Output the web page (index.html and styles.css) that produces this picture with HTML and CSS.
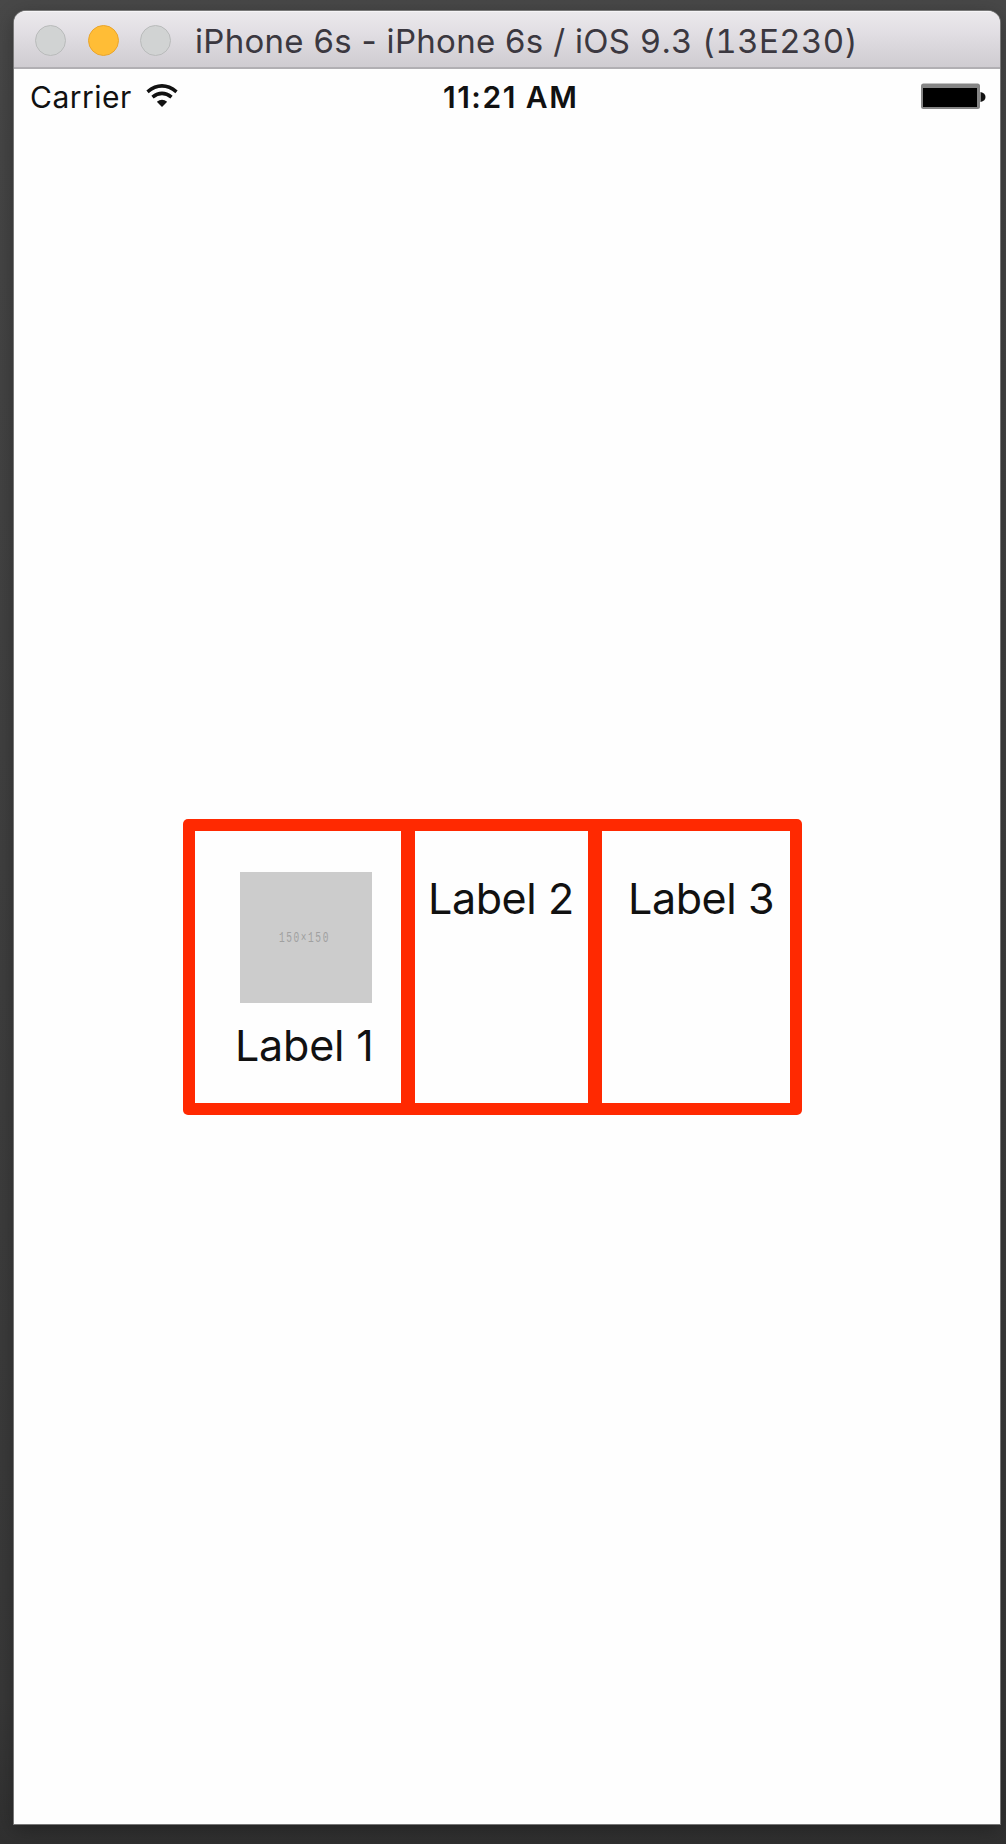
FILE: index.html
```html
<!DOCTYPE html>
<html lang="en">
<head>
<meta charset="utf-8">
<title>iPhone 6s Simulator</title>
<link rel="stylesheet" href="styles.css">
</head>
<body>
<main class="window">
  <header class="titlebar">
    <div class="controls">
      <span class="control"></span>
      <span class="control control-minimize"></span>
      <span class="control"></span>
    </div>
    <h1 class="title">iPhone 6s - iPhone 6s / iOS <span class="version">9.3 (13E230)</span></h1>
  </header>
  <section class="screen">
    <div class="statusbar">
      <div class="network">
        <span class="carrier">Carrier</span>
        <svg class="wifi" width="32" height="24" viewBox="0 0 32 24">
          <path d="M1.5 7.8Q16 -4 30.5 7.8M6.5 13.2Q16 5.7 25.5 13.2" fill="none" stroke="#111" stroke-width="3.6"/>
          <path d="M10.8 17.7Q16 13.8 21.2 17.7L16 23Z" fill="#111"/>
        </svg>
      </div>
      <span class="time">11:21 AM</span>
      <svg class="battery" width="66" height="27" viewBox="0 0 66 27">
        <rect x="0" y="0.5" width="59" height="25.5" rx="2.5" fill="#858585"/>
        <rect x="2" y="5" width="54" height="19" fill="#000"/>
        <path d="M59.5 9Q64.5 10 64.5 14Q64.5 18 59.5 19Z" fill="#111"/>
      </svg>
    </div>
    <div class="stack">
      <div class="cell cell-first">
        <div class="placeholder"><span class="dimensions">150×150</span></div>
        <span class="label label-one">Label 1</span>
      </div>
      <div class="cell cell-second"><span class="label">Label 2</span></div>
      <div class="cell cell-third"><span class="label">Label 3</span></div>
    </div>
  </section>
</main>
</body>
</html>
```
FILE: styles.css
```css
* { box-sizing: border-box; }
body {
  margin: 0;
  height: 1844px;
  padding: 11px 6px 20px 14px;
  background: linear-gradient(#484848 0, #454545 150px, #383838 1700px, #303030 1844px);
  font-family: Inter, "Liberation Sans", sans-serif;
  color: #111;
  overflow: hidden;
}
.window {
  display: flex;
  flex-direction: column;
  height: 1813px;
  border-radius: 12px 12px 0 0;
  overflow: hidden;
  background: #fefefe;
  box-shadow: 0 0 0 1px #777, 0 5px 20px rgba(0, 0, 0, .3);
}
.titlebar {
  display: flex;
  align-items: center;
  height: 58px;
  padding-left: 21px;
  background: linear-gradient(#ebe9ec, #e2dfe4 35%, #cfccd1);
  border-bottom: 2px solid #b1afb3;
  border-top: 1px solid #f6f5f7;
}
.controls { display: flex; gap: 21.5px; width: 160px; margin-top: 1px; }
.control {
  width: 31px;
  height: 31px;
  border-radius: 50%;
  background: #d1d3d3;
  border: 1.5px solid #b9bbbb;
}
.control-minimize { background: #ffbd36; border-color: #e9a52d; }
.title {
  margin: 2px 0 0;
  font-size: 33px;
  font-weight: 400;
  letter-spacing: .3px;
  line-height: 40px;
  color: #3b3840;
  white-space: nowrap;
}
.version { font-variant-numeric: tabular-nums; letter-spacing: .42px; }
.statusbar {
  display: grid;
  grid-template-columns: 429px 1fr 79px;
  align-items: center;
  height: 56px;
}
.network { display: flex; align-items: center; gap: 14px; padding-left: 16px; }
.carrier { width: 102px; font-size: 30px; letter-spacing: .5px; white-space: nowrap; }
.wifi { margin-bottom: 3px; }
.time { font-size: 30px; font-weight: 600; letter-spacing: 1.5px; }
.battery { margin-bottom: 2px; }
.stack {
  display: grid;
  grid-template-columns: 206px 173px 188px;
  gap: 14px;
  width: 619px;
  height: 296px;
  margin: 694px 0 0 169px;
  padding: 12px;
  border-radius: 5px;
  background: #ff2901;
}
.cell { background: #fefefe; white-space: nowrap; }
.cell-first { padding: 41px 0 0 42px; }
.cell-second { padding: 41px 0 0 13px; }
.cell-third { padding: 41px 0 0 26px; }
.placeholder {
  display: flex;
  align-items: center;
  justify-content: center;
  width: 132px;
  height: 131px;
  margin-left: 3px;
  background: #ccc;
}
.dimensions {
  margin-left: -3px;
  color: #a0a0a0;
  font: 14px "Liberation Mono", monospace;
  letter-spacing: 2.3px;
  transform: scaleX(.68);
}
.label { display: block; font-size: 43px; line-height: 52px; letter-spacing: -.4px; }
.label-one { margin: 16px 0 0 -2px; letter-spacing: -.2px; }
```
